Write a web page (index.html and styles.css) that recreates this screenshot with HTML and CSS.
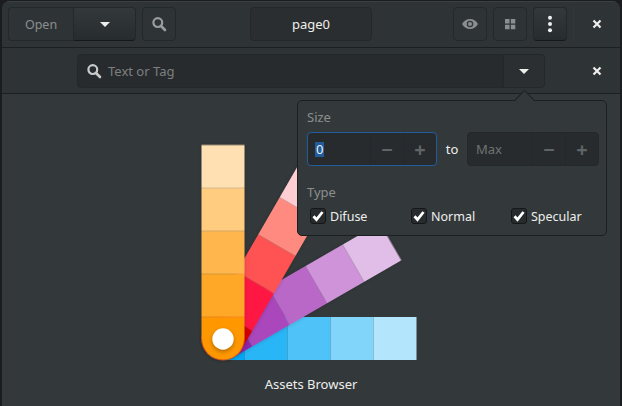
FILE: index.html
```html
<!DOCTYPE html>
<html lang="en">
<head>
    <meta charset="UTF-8">
    <meta name="viewport" content="width=device-width, initial-scale=1.0">
    <title>Assets Browser</title>
    <link rel="stylesheet" href="styles.css">
</head>
<body>
<div class="window">

    <header class="titlebar">
        <div class="linked open-group">
            <button class="btn open-btn">Open</button>
            <button class="btn raised arrow-btn"><span class="arrow"></span></button>
        </div>
        <button class="btn icon-btn">
            <svg width="16" height="16" viewBox="0 0 16 16"><circle cx="6.800" cy="6.600" r="4.400" fill="none" stroke="#9a9d9d" stroke-width="2.200"/><path d="M10 10l4 4" stroke="#9a9d9d" stroke-width="2.600" stroke-linecap="round"/></svg>
        </button>
        <div class="page-name">page0</div>
        <div class="titlebar-right">
            <button class="btn icon-btn">
                <svg width="18" height="12" viewBox="0 0 18 12"><path d="M1 6C3 2.600 5.800 1 9 1s6 1.600 8 5c-2 3.400-4.800 5-8 5S3 9.400 1 6z" fill="#8b8e8e"/><circle cx="9" cy="6" r="3.300" fill="#33383b"/><circle cx="9" cy="6" r="2" fill="#8b8e8e"/></svg>
            </button>
            <button class="btn icon-btn">
                <svg width="12" height="12" viewBox="0 0 12 12"><path d="M1 1h4.500v4.500H1zM6.800 1h4.500v4.500H6.800zM1 6.800h4.500v4.500H1zM6.800 6.800h4.500v4.500H6.800z" fill="#8b8e8e"/></svg>
            </button>
            <button class="btn raised icon-btn">
                <svg width="6" height="18" viewBox="0 0 6 18"><circle cx="3" cy="2.800" r="2" fill="#eeeeec"/><circle cx="3" cy="9" r="2" fill="#eeeeec"/><circle cx="3" cy="15.200" r="2" fill="#eeeeec"/></svg>
            </button>
            <div class="sep"></div>
            <svg class="close" width="10" height="10" viewBox="0 0 10 10"><path d="M1.500 1.500l7 7M8.500 1.500l-7 7" stroke="#eeeeec" stroke-width="2.200"/></svg>
        </div>
    </header>

    <div class="searchbar">
        <div class="search-field">
            <svg width="16" height="16" viewBox="0 0 16 16"><circle cx="6.800" cy="6.600" r="4.400" fill="none" stroke="#c9cbcb" stroke-width="2.200"/><path d="M10 10l4 4" stroke="#c9cbcb" stroke-width="2.600" stroke-linecap="round"/></svg>
            <span class="placeholder">Text or Tag</span>
        </div>
        <button class="filter-btn"><span class="arrow"></span></button>
        <svg class="close" width="10" height="10" viewBox="0 0 10 10"><path d="M1.500 1.500l7 7M8.500 1.500l-7 7" stroke="#eeeeec" stroke-width="2.200"/></svg>
    </div>

    <main class="content">
        <svg class="fan" width="220" height="220" viewBox="199 143 220 220">
            <defs>
                <path id="pin" d="M244.600 317V360H223A21.500 21.500 0 0 1 223 317Z"/>
            </defs>
            <!-- the leaves all turn about the pin at 223,338.5 -->
            <g>
                <use href="#pin" fill="#03a9f4"/>
                <rect x="244.500" y="317" width="43.100" height="43" fill="#29b6f6"/>
                <rect x="287.500" y="317" width="43.100" height="43" fill="#4fc3f7"/>
                <rect x="330.500" y="317" width="43.100" height="43" fill="#81d4fa"/>
                <rect x="373.500" y="317" width="43" height="43" fill="#b3e5fc"/>
            </g>
            <g class="leaf" transform="rotate(-30 223 338.500)">
                <use href="#pin" fill="#8e24aa"/>
                <rect x="244.500" y="317" width="43.100" height="43" fill="#ab47bc"/>
                <rect x="287.500" y="317" width="43.100" height="43" fill="#ba68c8"/>
                <rect x="330.500" y="317" width="43.100" height="43" fill="#ce93d8"/>
                <rect x="373.500" y="317" width="43" height="43" fill="#e1bee7"/>
            </g>
            <g class="leaf" transform="rotate(-60 223 338.500)">
                <use href="#pin" fill="#d50000"/>
                <rect x="244.500" y="317" width="43.100" height="43" fill="#ff1744"/>
                <rect x="287.500" y="317" width="43.100" height="43" fill="#ff5252"/>
                <rect x="330.500" y="317" width="43.100" height="43" fill="#ff8a80"/>
                <rect x="373.500" y="317" width="43" height="43" fill="#ffcdd2"/>
            </g>
            <g class="leaf" transform="rotate(-90 223 338.500)">
                <use href="#pin" fill="#ff9800"/>
                <rect x="244.500" y="317" width="43.100" height="43" fill="#ffa726"/>
                <rect x="287.500" y="317" width="43.100" height="43" fill="#ffb74d"/>
                <rect x="330.500" y="317" width="43.100" height="43" fill="#ffcc80"/>
                <rect x="373.500" y="317" width="43" height="43" fill="#ffe0b2"/>
            </g>
            <circle class="pin-hole" cx="223" cy="339" r="10.700" fill="#fff"/>
        </svg>
        <p class="caption">Assets Browser</p>
    </main>

    <div class="popover">
        <div class="popover-tip"></div>
        <div class="label">Size</div>
        <div class="size-row">
            <div class="spin focused">
                <span class="spin-value"><span class="selected">0</span></span>
                <span class="spin-btn">&minus;</span>
                <span class="spin-btn">+</span>
            </div>
            <span class="to">to</span>
            <div class="spin spin-max">
                <span class="spin-value muted">Max</span>
                <span class="spin-btn">&minus;</span>
                <span class="spin-btn">+</span>
            </div>
        </div>
        <div class="label type-label">Type</div>
        <div class="checks">
            <label class="check"><span class="box"><svg width="12" height="12" viewBox="0 0 12 12"><path d="M1.500 6.200l3 3.300L10.500 2" fill="none" stroke="#fff" stroke-width="2.800"/></svg></span>Difuse</label>
            <label class="check"><span class="box"><svg width="12" height="12" viewBox="0 0 12 12"><path d="M1.500 6.200l3 3.300L10.500 2" fill="none" stroke="#fff" stroke-width="2.800"/></svg></span>Normal</label>
            <label class="check"><span class="box"><svg width="12" height="12" viewBox="0 0 12 12"><path d="M1.500 6.200l3 3.300L10.500 2" fill="none" stroke="#fff" stroke-width="2.800"/></svg></span>Specular</label>
        </div>
    </div>
</div>
</body>
</html>
```

FILE: styles.css
```css
* {
    margin: 0;
    padding: 0;
    box-sizing: border-box;
}

body {
    background-color: #1a1c1e;
    width: 622px;
    height: 406px;
    overflow: hidden;
    font-family: "Noto Sans", sans-serif;
    font-size: 13px;
    color: #eeeeec;
}

.window {
    position: relative;
    height: 405px;
    margin: 1px 2px 0 2px;
    background-color: #33393b;
    border-radius: 8px 8px 0 0;
    overflow: hidden;
}

.titlebar {
    display: flex;
    align-items: center;
    height: 47px;
    padding-left: 6px;
    background-color: #2e3436;
    border-bottom: 1px solid #1c1f1f;
    box-shadow: inset 0 1px #3b4143;
}

.btn {
    height: 34px;
    background-color: #2e3436;
    border: 1px solid #23282a;
    border-radius: 4px;
    color: #8b8e8e;
    font: inherit;
}

.raised {
    background: linear-gradient(#33393b, #272c2e);
    border-bottom-color: #151718;
}

.icon-btn {
    width: 34px;
    display: flex;
    align-items: center;
    justify-content: center;
}

.linked {
    display: flex;
}

.open-group {
    margin-right: 6px;
}

.open-btn {
    width: 65px;
    border-radius: 4px 0 0 4px;
    border-right: none;
    font-size: 12.5px;
}

.arrow-btn {
    width: 63px;
    border-radius: 0 4px 4px 0;
    display: flex;
    align-items: center;
    justify-content: center;
}

.arrow {
    display: block;
    width: 0;
    height: 0;
    border-left: 5px solid transparent;
    border-right: 5px solid transparent;
    border-top: 5px solid #eeeeec;
}

.page-name {
    width: 122px;
    height: 34px;
    margin-left: 74px;
    display: flex;
    align-items: center;
    justify-content: center;
    background-color: #2a2e30;
    border: 1px solid #23282a;
    border-radius: 4px;
}

.titlebar-right {
    display: flex;
    align-items: center;
    gap: 6px;
    margin-left: auto;
}

.sep {
    width: 1px;
    height: 34px;
    background-color: #33393b;
}

.close {
    margin: 0 18px 0 12px;
}

.searchbar {
    display: flex;
    align-items: center;
    height: 46px;
    padding: 1px 0 0 75px;
    background-color: #2e3436;
    border-bottom: 1px solid #1c1f1f;
}

.search-field {
    display: flex;
    align-items: center;
    gap: 6px;
    width: 426px;
    height: 34px;
    padding-left: 8px;
    background-color: #272b2d;
    border: 1px solid #23282a;
    border-radius: 4px 0 0 4px;
}

.placeholder {
    color: #7d8080;
}

.filter-btn {
    width: 42px;
    height: 34px;
    margin-right: 47px;
    display: flex;
    align-items: center;
    justify-content: center;
    background-color: #2b2f31;
    border: 1px solid #23282a;
    border-radius: 0 4px 4px 0;
}

.searchbar .close {
    margin: 0;
}

.content {
    display: flex;
    flex-direction: column;
    align-items: center;
    padding-top: 49px;
}

.fan {
    display: block;
    margin-right: 4px;
}

.leaf {
    filter: drop-shadow(0 0 2px rgba(0, 0, 0, 0.18));
}

.pin-hole {
    filter: drop-shadow(0 2px 2px rgba(0, 0, 0, 0.3));
}

.caption {
    margin-top: 12px;
}

.popover {
    position: absolute;
    left: 295px;
    top: 99px;
    width: 310px;
    height: 136px;
    padding: 7px 6px 7px 9px;
    background-color: #33393b;
    border: 1px solid #1c1f1f;
    border-radius: 5px;
}

.popover-tip {
    position: absolute;
    left: 219px;
    top: -8px;
    width: 15px;
    height: 15px;
    background-color: #33393b;
    border-left: 1px solid #1c1f1f;
    border-top: 1px solid #1c1f1f;
    transform: rotate(45deg);
}

.label {
    color: #8b8e8e;
    height: 18px;
}

.size-row {
    display: flex;
    align-items: center;
    margin-top: 6px;
}

.spin {
    display: flex;
    width: 130px;
    height: 34px;
    background-color: #272b2d;
    border: 1px solid #23282a;
    border-radius: 4px;
}

.spin-max {
    width: 132px;
}

.spin.focused {
    border-color: #215d9c;
}

.spin-value {
    flex: 1;
    display: flex;
    align-items: center;
    padding-left: 8px;
}

.selected {
    background-color: #215d9c;
    line-height: 15px;
    margin-left: -1px;
    padding: 0 1px;
}

.muted {
    color: #6f7373;
}

.spin-btn {
    width: 33px;
    display: flex;
    align-items: center;
    justify-content: center;
    border-left: 1px solid #23282a;
    color: #5f6466;
    font-size: 20px;
    font-weight: bold;
}

.to {
    width: 30px;
    text-align: center;
}

.type-label {
    margin-top: 17px;
}

.checks {
    display: flex;
    margin-top: 6px;
    padding-left: 3px;
    font-size: 12.5px;
}

.check {
    display: flex;
    flex: none;
    align-items: center;
    gap: 4px;
    width: 100px;
    height: 18px;
}

.check:first-child {
    width: 101px;
}

.box {
    width: 16px;
    height: 16px;
    display: flex;
    align-items: center;
    justify-content: center;
    background-color: #272b2d;
    border: 1px solid #151718;
    border-radius: 3px;
}
```
